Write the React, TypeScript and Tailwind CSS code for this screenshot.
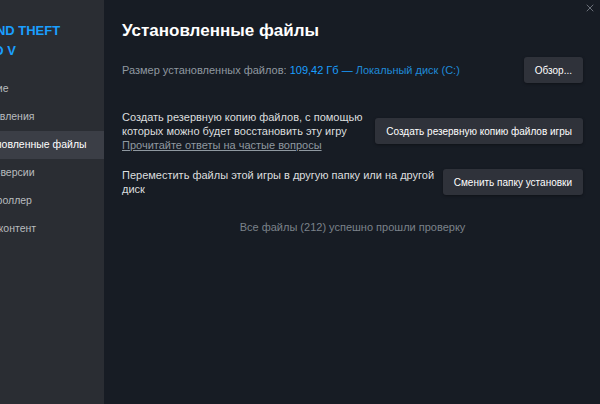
import { X } from "lucide-react";

const MENU = [
  "Общие",
  "Обновления",
  "Установленные файлы",
  "Бета-версии",
  "Контроллер",
  "Доп. контент",
];

function Sidebar() {
  return (
    <aside className="w-[104px] shrink-0 overflow-hidden bg-[#2a2d33]">
      <div className="pt-[21px]">
        <h1 className="ml-[-33px] w-[200px] text-[13px] font-bold uppercase leading-[20px] text-[#1a9fff]">
          Grand Theft
          <br />
          Auto V
        </h1>
        <nav className="mt-[14px] flex flex-col">
          {MENU.map((item, i) => (
            <div
              key={item}
              className={`flex h-[28px] items-center whitespace-nowrap text-[10.5px] ${
                i === 2 ? "bg-[#3b3e46] text-white" : "text-[#b8bcbf]"
              }`}
            >
              <span className="ml-[-26px]">{item}</span>
            </div>
          ))}
        </nav>
      </div>
    </aside>
  );
}

function SteamButton({ children }: { children: string }) {
  return (
    <button
      type="button"
      className="h-[26px] shrink-0 rounded-[3px] bg-[#2f323a] px-[11px] text-[10px] text-white shadow-[0_1px_3px_rgba(0,0,0,0.35)]"
    >
      {children}
    </button>
  );
}

export default function App() {
  return (
    <div
      className="flex h-[404px] w-[600px] overflow-hidden bg-[#171c24]"
      style={{ fontFamily: '"Liberation Sans", Arial, sans-serif' }}
    >
      <Sidebar />
      <main className="relative flex flex-1 flex-col pl-[18px] pr-[17px] pt-[20px]">
        <X className="absolute right-[4px] top-[2px] h-[12px] w-[12px] text-[#6b7079]" strokeWidth={2} />

        <h2 className="text-[17px] font-bold leading-[22px] text-white">Установленные файлы</h2>

        <div className="mt-[15px] flex items-center justify-between">
          <p className="text-[11px] text-[#8f98a0]">
            Размер установленных файлов:{" "}
            <span className="text-[#1a9fff]">109,42 Гб —</span>{" "}
            <span className="text-[#1f8ad8]">Локальный диск (C:)</span>
          </p>
          <SteamButton>Обзор...</SteamButton>
        </div>

        <div className="mt-[27px] flex items-center justify-between">
          <div className="w-[244px] shrink-0 text-[11px] leading-[14px] text-[#dcdedf]">
            <p>Создать резервную копию файлов, с помощью которых можно будет восстановить эту игру</p>
            <a className="text-[#8f98a0] underline">Прочитайте ответы на частые вопросы</a>
          </div>
          <SteamButton>Создать резервную копию файлов игры</SteamButton>
        </div>

        <div className="mt-[16px] flex items-center justify-between">
          <p className="w-[314px] shrink-0 text-[11px] leading-[14px] text-[#dcdedf]">
            Переместить файлы этой игры в другую папку или на другой диск
          </p>
          <SteamButton>Сменить папку установки</SteamButton>
        </div>

        <p className="mt-[23px] text-center text-[11px] text-[#7b828a]">
          Все файлы (212) успешно прошли проверку
        </p>
      </main>
    </div>
  );
}
